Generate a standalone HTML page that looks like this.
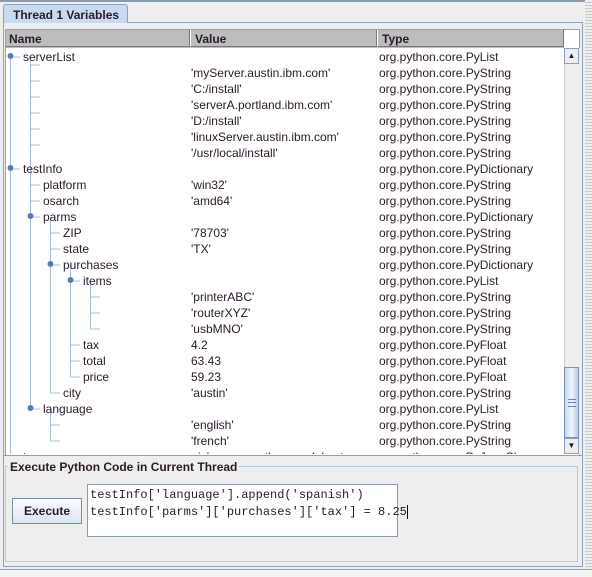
<html><head><style>
body{margin:0;width:592px;height:577px;background:#eeeeee;position:relative;overflow:hidden;font-family:"Liberation Sans",sans-serif;font-size:12px;color:#2a1a2a}
.a{position:absolute}
.t{position:absolute;white-space:nowrap;line-height:16px}
</style></head><body>
<div class="a" style="left:0;top:0;width:592px;height:2px;background:#8a9ab0"></div>
<div class="a" style="left:585px;top:0;width:7px;height:570px;background:repeating-linear-gradient(#eee 0 2px,#c8c8c8 2px 3px)"></div>
<div class="a" style="left:3px;top:22px;width:580px;height:545px;border:1px solid #8da0bd;box-sizing:border-box;background:#eee"></div>
<div class="a" style="left:3px;top:4px;width:125px;height:19px;border:1px solid #8da0bd;border-bottom:none;border-radius:3px 3px 0 0;background:#c8daf0;box-sizing:border-box;font-weight:bold;padding:3px 0 0 9px">Thread 1 Variables</div>
<div class="a" style="left:5px;top:29px;width:575px;height:427px;border:1px solid #8da0bd;box-sizing:border-box;background:#fff"></div>
<div class="a" style="left:6px;top:30px;width:558px;height:18px;background:#bdbdbd;font-weight:bold">
<div class="a" style="left:0;top:0;width:184px;height:17px;border-right:1px solid #777;border-bottom:1px solid #777;padding:2px 3px;box-sizing:border-box">Name</div>
<div class="a" style="left:184px;top:0;width:187px;height:17px;border-right:1px solid #777;border-bottom:1px solid #777;border-left:1px solid #fff;padding:2px 4px;box-sizing:border-box">Value</div>
<div class="a" style="left:371px;top:0;width:187px;height:17px;border-right:1px solid #777;border-bottom:1px solid #777;border-left:1px solid #fff;padding:2px 4px;box-sizing:border-box">Type</div>
</div>
<div class="a" style="left:564px;top:48px;width:15px;height:406px;background:#eee;border-left:1px solid #ccc"></div>
<div class="a" style="left:564px;top:48px;width:15px;height:16px;background:#eee;border:1px solid #8da0bd;box-sizing:border-box;font-size:8px;text-align:center;line-height:14px">▲</div>
<div class="a" style="left:564px;top:438px;width:15px;height:16px;background:#eee;border:1px solid #8da0bd;box-sizing:border-box;font-size:8px;text-align:center;line-height:14px">▼</div>
<div class="a" style="left:564px;top:367px;width:15px;height:71px;background:linear-gradient(90deg,#c4d6ee,#f2f6fc 50%,#b8cce8);border:1px solid #7a92b8;box-sizing:border-box"></div>
<div class="a" style="left:568px;top:399px;width:8px;height:6px;border-top:1px solid #6a84b0;border-bottom:1px solid #6a84b0"><div style="margin-top:2px;height:1px;background:#6a84b0"></div></div>
<div class="a" style="left:6px;top:48px;width:558px;height:406px;overflow:hidden">
<svg class="a" style="left:0;top:0" width="200" height="420" stroke="#a8bcdc" fill="none">
<path d="M4.5 9V420M4.5 9H14M24.5 9V145M24.5 17H34M24.5 33H34M24.5 49H34M24.5 65H34M24.5 81H34M24.5 97H34M4.5 121H14M24.5 121V361M24.5 137H34M24.5 153H34M24.5 169H34M44.5 169V345M44.5 185H54M44.5 201H54M44.5 217H54M64.5 217V329M64.5 233H74M84.5 233V281M84.5 249H94M84.5 265H94M84.5 281H94M64.5 297H74M64.5 313H74M64.5 329H74M44.5 345H54M24.5 361H34M44.5 361V393M44.5 377H54M44.5 393H54M4.5 409H14"/>
<g fill="#5a7ab5" stroke="#5a7ab5"><circle cx="4.5" cy="8" r="2.5"/><circle cx="4.5" cy="120" r="2.5"/><circle cx="24.5" cy="168" r="2.5"/><circle cx="44.5" cy="216" r="2.5"/><circle cx="64.5" cy="232" r="2.5"/><circle cx="24.5" cy="360" r="2.5"/></g>
</svg>
<div class="t" style="left:17px;top:1px">serverList</div><div class="t" style="left:373px;top:1px">org.python.core.PyList</div>
<div class="t" style="left:185px;top:17px">'myServer.austin.ibm.com'</div><div class="t" style="left:373px;top:17px">org.python.core.PyString</div>
<div class="t" style="left:185px;top:33px">'C:/install'</div><div class="t" style="left:373px;top:33px">org.python.core.PyString</div>
<div class="t" style="left:185px;top:49px">'serverA.portland.ibm.com'</div><div class="t" style="left:373px;top:49px">org.python.core.PyString</div>
<div class="t" style="left:185px;top:65px">'D:/install'</div><div class="t" style="left:373px;top:65px">org.python.core.PyString</div>
<div class="t" style="left:185px;top:81px">'linuxServer.austin.ibm.com'</div><div class="t" style="left:373px;top:81px">org.python.core.PyString</div>
<div class="t" style="left:185px;top:97px">'/usr/local/install'</div><div class="t" style="left:373px;top:97px">org.python.core.PyString</div>
<div class="t" style="left:17px;top:113px">testInfo</div><div class="t" style="left:373px;top:113px">org.python.core.PyDictionary</div>
<div class="t" style="left:37px;top:129px">platform</div><div class="t" style="left:185px;top:129px">'win32'</div><div class="t" style="left:373px;top:129px">org.python.core.PyString</div>
<div class="t" style="left:37px;top:145px">osarch</div><div class="t" style="left:185px;top:145px">'amd64'</div><div class="t" style="left:373px;top:145px">org.python.core.PyString</div>
<div class="t" style="left:37px;top:161px">parms</div><div class="t" style="left:373px;top:161px">org.python.core.PyDictionary</div>
<div class="t" style="left:57px;top:177px">ZIP</div><div class="t" style="left:185px;top:177px">'78703'</div><div class="t" style="left:373px;top:177px">org.python.core.PyString</div>
<div class="t" style="left:57px;top:193px">state</div><div class="t" style="left:185px;top:193px">'TX'</div><div class="t" style="left:373px;top:193px">org.python.core.PyString</div>
<div class="t" style="left:57px;top:209px">purchases</div><div class="t" style="left:373px;top:209px">org.python.core.PyDictionary</div>
<div class="t" style="left:77px;top:225px">items</div><div class="t" style="left:373px;top:225px">org.python.core.PyList</div>
<div class="t" style="left:185px;top:241px">'printerABC'</div><div class="t" style="left:373px;top:241px">org.python.core.PyString</div>
<div class="t" style="left:185px;top:257px">'routerXYZ'</div><div class="t" style="left:373px;top:257px">org.python.core.PyString</div>
<div class="t" style="left:185px;top:273px">'usbMNO'</div><div class="t" style="left:373px;top:273px">org.python.core.PyString</div>
<div class="t" style="left:77px;top:289px">tax</div><div class="t" style="left:185px;top:289px">4.2</div><div class="t" style="left:373px;top:289px">org.python.core.PyFloat</div>
<div class="t" style="left:77px;top:305px">total</div><div class="t" style="left:185px;top:305px">63.43</div><div class="t" style="left:373px;top:305px">org.python.core.PyFloat</div>
<div class="t" style="left:77px;top:321px">price</div><div class="t" style="left:185px;top:321px">59.23</div><div class="t" style="left:373px;top:321px">org.python.core.PyFloat</div>
<div class="t" style="left:57px;top:337px">city</div><div class="t" style="left:185px;top:337px">'austin'</div><div class="t" style="left:373px;top:337px">org.python.core.PyString</div>
<div class="t" style="left:37px;top:353px">language</div><div class="t" style="left:373px;top:353px">org.python.core.PyList</div>
<div class="t" style="left:185px;top:369px">'english'</div><div class="t" style="left:373px;top:369px">org.python.core.PyString</div>
<div class="t" style="left:185px;top:385px">'french'</div><div class="t" style="left:373px;top:385px">org.python.core.PyString</div>
<div class="t" style="left:17px;top:401px">types</div><div class="t" style="left:185px;top:401px">&lt;jclass org.python.modules.types</div><div class="t" style="left:373px;top:401px">org.python.core.PyJavaClass</div>
</div>
<div class="a" style="left:3px;top:455px;width:580px;height:1px;background:#8da0bd"></div>
<div class="a" style="left:5px;top:466px;width:573px;height:96px;border:1px solid #b8c8dc;box-sizing:border-box"></div>
<div class="t" style="left:8px;top:459px;background:#eee;padding:0 2px;font-weight:bold">Execute Python Code in Current Thread</div>
<div class="a" style="left:12px;top:498px;width:70px;height:26px;border:1px solid #7a8ca8;box-sizing:border-box;background:linear-gradient(#fbfcfe,#dbe6f4);font-weight:bold;text-align:center;line-height:24px">Execute</div>
<div class="a" style="left:87px;top:484px;width:311px;height:53px;border:1px solid #8a9ab0;box-sizing:border-box;background:#fff;font-family:'Liberation Mono',monospace;font-size:12px;padding:2px 0 0 2px;line-height:17px;white-space:pre">testInfo['language'].append('spanish')
testInfo['parms']['purchases']['tax'] = 8.25<span style="border-left:1px solid #000"></span></div>
<div class="a" style="left:0;top:569px;width:592px;height:1px;background:#8da0bd"></div>
<div class="a" style="left:0;top:570px;width:592px;height:7px;background:#f4f4f4"></div>
</body></html>
